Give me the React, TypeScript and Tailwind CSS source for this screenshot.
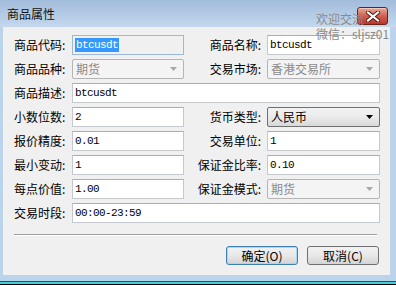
import { ReactNode } from 'react'

const CJK = "font-['Noto_Sans_CJK_SC','Noto_Sans',sans-serif]"
const MONO = "font-['Liberation_Mono','Noto_Sans_CJK_SC',monospace]"

function Label({ children, right }: { children: ReactNode; right?: boolean }) {
  return (
    <div className={`flex h-5 items-center text-[12px] leading-none text-black ${CJK} ${right ? 'justify-end pr-[6px]' : ''}`}>
      {children}
    </div>
  )
}

function TextBox({ value, wide, selected }: { value: string; wide?: boolean; selected?: boolean }) {
  return (
    <div
      className={`flex h-5 items-center border px-[2px] ${wide ? 'col-span-3' : ''} ${
        selected ? 'border-[#9db9d9] bg-[#f0f0f0]' : 'border-[#c5c8ce] border-t-[#abadb3] bg-white'
      }`}
    >
      <span
        className={`text-[11px] leading-[14px] tracking-[-0.6px] ${MONO} ${
          selected ? 'bg-[#3399ff] px-[1px] text-white' : 'text-black'
        }`}
      >
        {value}
      </span>
    </div>
  )
}

function Combo({ value, enabled }: { value: string; enabled?: boolean }) {
  return (
    <div
      className={`flex h-5 items-center justify-between rounded-[2px] border pl-[3px] pr-[6px] ${
        enabled
          ? 'border-[#707070] bg-gradient-to-b from-[#f2f2f2] via-[#ebebeb] to-[#d8d8d8]'
          : 'border-[#b5b5b5] bg-[#f4f4f4]'
      }`}
    >
      <span className={`text-[12px] leading-none ${CJK} ${enabled ? 'text-black' : 'text-[#8a8a8a]'}`}>{value}</span>
      <svg width="7" height="4" viewBox="0 0 7 4">
        <path d="M0 0h7L3.5 4z" fill={enabled ? '#000' : '#a8a8a8'} />
      </svg>
    </div>
  )
}

function Button({ children, primary }: { children: ReactNode; primary?: boolean }) {
  return (
    <div
      className={`flex h-[19px] w-[72px] items-center justify-center rounded-[3px] border bg-gradient-to-b from-[#f2f2f2] via-[#e8e8e8] to-[#d4d4d4] text-[12px] leading-none text-black ${CJK} ${
        primary ? 'border-[#3c7fb1] shadow-[inset_0_0_0_1px_#a6d8f5]' : 'border-[#707070]'
      }`}
    >
      {children}
    </div>
  )
}

export default function App() {
  return (
    <div className="relative h-[285px] w-[396px] overflow-hidden bg-[#bcd3ec]">
      {/* title bar */}
      <div className="flex h-[27px] items-center bg-gradient-to-b from-[#a2bcdb] to-[#c4d8ee] pl-[7px]">
        <span className={`text-[12px] leading-none text-[#111] ${CJK}`}>商品属性</span>
      </div>
      <div className="absolute left-[357px] top-[7px] flex h-[18px] w-[31px] items-center justify-center rounded-[3px] border border-[#6b2219] bg-gradient-to-b from-[#e9a898] via-[#d0604f] to-[#b8352a] shadow-[inset_0_1px_0_#f4c8bc]">
        <svg width="14" height="11" viewBox="0 0 14 11">
          <path d="M2 1.5l10 8M12 1.5l-10 8" stroke="#4a1510" strokeWidth="4" strokeLinecap="square" />
          <path d="M2 1.5l10 8M12 1.5l-10 8" stroke="#fff" strokeWidth="2.2" strokeLinecap="square" />
        </svg>
      </div>

      {/* client area */}
      <div className="ml-[3px] mr-[6px] flex h-[248px] flex-col bg-[#f0f0f0] pl-[11px] pr-[10px] pt-[8px]">
        <div className="grid grid-cols-[58px_112px_83px_113px] gap-y-[4px]">
          <Label>商品代码:</Label>
          <TextBox value="btcusdt" selected />
          <Label right>商品名称:</Label>
          <TextBox value="btcusdt" />

          <Label>商品品种:</Label>
          <Combo value="期货" />
          <Label right>交易市场:</Label>
          <Combo value="香港交易所" />

          <Label>商品描述:</Label>
          <TextBox value="btcusdt" wide />

          <Label>小数位数:</Label>
          <TextBox value="2" />
          <Label right>货币类型:</Label>
          <Combo value="人民币" enabled />

          <Label>报价精度:</Label>
          <TextBox value="0.01" />
          <Label right>交易单位:</Label>
          <TextBox value="1" />

          <Label>最小变动:</Label>
          <TextBox value="1" />
          <Label right>保证金比率:</Label>
          <TextBox value="0.10" />

          <Label>每点价值:</Label>
          <TextBox value="1.00" />
          <Label right>保证金模式:</Label>
          <Combo value="期货" />

          <Label>交易时段:</Label>
          <TextBox value="00:00-23:59" wide />
        </div>

        <div className="mr-[3px] mt-[11px] h-[2px] border-t border-b border-t-[#a0a0a0] border-b-white" />

        <div className="mr-[1px] mt-[10px] flex justify-end gap-[9px]">
          <Button primary>确定(O)</Button>
          <Button>取消(C)</Button>
        </div>
      </div>

      {/* bottom edge */}
      <div className="mt-[6px] h-px bg-[#2c4f6a]" />
      <div className="h-[2px] bg-[#3fd0dc]" />
      <div className="h-px bg-black" />

      {/* watermark */}
      <div className={`pointer-events-none absolute left-[316px] top-[11px] text-[12px] leading-[15px] text-[#8a8a8a] ${CJK}`}>
        <div>欢迎交流</div>
        <div>微信：sljsz01</div>
      </div>
    </div>
  )
}
